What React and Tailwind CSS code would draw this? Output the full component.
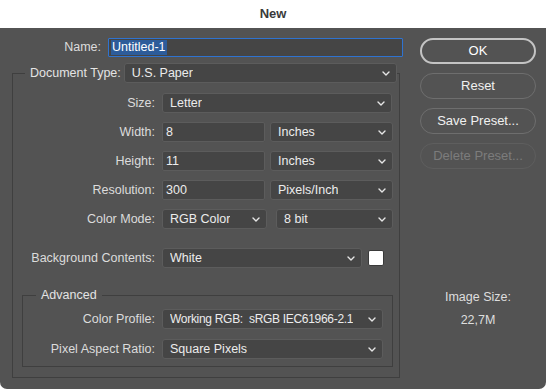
const font = { fontFamily: '"Liberation Sans", Arial, sans-serif' };

function Chevron() {
  return (
    <svg width="8" height="5" viewBox="0 0 8 5" className="shrink-0">
      <path d="M1 1l3 3 3-3" fill="none" stroke="#e6e6e6" strokeWidth="1.4" strokeLinecap="round" strokeLinejoin="round" />
    </svg>
  );
}

function Select({ value, className = '', textClass = '' }) {
  return (
    <div className={`h-[20px] flex items-center justify-between pl-[7px] pr-[6px] bg-[#454545] border border-[#5c5c5c] rounded-[3px] text-[#ececec] ${className}`}>
      <span className={`truncate ${textClass}`}>{value}</span>
      <Chevron />
    </div>
  );
}

function Input({ value, className = '' }) {
  return (
    <div className={`h-[20px] flex items-center pl-[3px] bg-[#454545] border border-[#5c5c5c] rounded-[2px] text-[#ececec] ${className}`}>
      {value}
    </div>
  );
}

function Row({ label, labelW = 'w-[149px]', children, className = '' }) {
  return (
    <div className={`flex items-center ${className}`}>
      <div className={`${labelW} shrink-0 pr-[7px] text-right text-[#dcdcdc]`}>{label}</div>
      {children}
    </div>
  );
}

function Button({ children, variant }) {
  const styles = {
    primary: 'border-2 border-[#c4c4c4] text-white',
    normal: 'border border-[#6e6e6e] text-[#f0f0f0]',
    disabled: 'border border-[#5e5e5e] text-[#7c7c7c]',
  };
  return (
    <div className={`h-[26px] w-[116px] rounded-full flex items-center justify-center text-[13px] ${styles[variant]}`}>
      {children}
    </div>
  );
}

export default function App() {
  return (
    <div className="w-[546px] h-[389px] bg-white text-[12.5px]" style={font}>
      <div className="h-[28px] flex items-center justify-center text-[13px] font-bold text-[#3a3a3a]">New</div>
      <div className="h-[361px] bg-[#535353] rounded-b-[7px] flex">
        <div className="w-[410px] pt-[10px] pl-[12px]">
          <Row label="Name:" labelW="w-[96px]" className="-ml-[12px] pl-[12px]">
            <div className="h-[19px] w-[295px] flex items-center pl-[2px] bg-[#454545] border border-[#2f73d0] rounded-[1px]">
              <span className="bg-[#2d5c9a] text-white px-[1px] leading-[15px]">Untitled-1</span>
            </div>
          </Row>

          <fieldset className="w-[388px] mt-[6px] border border-[#3f3f3f] pt-[10px] pb-[10px]">
            <legend className="ml-[12px] pl-[5px] flex items-center">
              <span className="text-[#e4e4e4] pr-[3px]">Document Type:</span>
              <Select value="U.S. Paper" className="w-[273px]" />
            </legend>

            <div className="flex flex-col gap-[9px]">
              <Row label="Size:">
                <Select value="Letter" className="w-[230px]" />
              </Row>
              <Row label="Width:">
                <Input value="8" className="w-[103px]" />
                <Select value="Inches" className="w-[123px] ml-[5px]" />
              </Row>
              <Row label="Height:">
                <Input value="11" className="w-[103px]" />
                <Select value="Inches" className="w-[123px] ml-[5px]" />
              </Row>
              <Row label="Resolution:">
                <Input value="300" className="w-[103px]" />
                <Select value="Pixels/Inch" className="w-[123px] ml-[5px]" />
              </Row>
              <Row label="Color Mode:">
                <Select value="RGB Color" className="w-[105px]" />
                <Select value="8 bit" className="w-[117px] ml-[9px]" />
              </Row>
            </div>

            <Row label="Background Contents:" className="mt-[19px]">
              <Select value="White" className="w-[200px]" />
              <div className="ml-[6px] w-[16px] h-[16px] bg-white rounded-[2px] border border-[#3a3a3a]" />
            </Row>

            <fieldset className="ml-[9px] mt-[19px] w-[371px] border border-[#3f3f3f] pt-[6px] pb-[7px]">
              <legend className="ml-[13px] px-[5px] text-[#e4e4e4] leading-[16px]">Advanced</legend>
              <div className="flex flex-col gap-[10px]">
                <Row label="Color Profile:" labelW="w-[139px]">
                  <Select
                    value="Working RGB:  sRGB IEC61966-2.1"
                    className="w-[221px]"
                    textClass="whitespace-pre text-[12px] tracking-[-0.3px]"
                  />
                </Row>
                <Row label="Pixel Aspect Ratio:" labelW="w-[139px]">
                  <Select value="Square Pixels" className="w-[221px]" />
                </Row>
              </div>
            </fieldset>
          </fieldset>
        </div>

        <div className="flex-1 pt-[10px] pl-[10px] flex flex-col">
          <div className="flex flex-col gap-[9px]">
            <Button variant="primary">OK</Button>
            <Button variant="normal">Reset</Button>
            <Button variant="normal">Save Preset...</Button>
            <Button variant="disabled">Delete Preset...</Button>
          </div>
          <div className="mt-[119px] w-[116px] flex flex-col items-center gap-[4px] text-[#dedede] text-[12.5px]">
            <div>Image Size:</div>
            <div>22,7M</div>
          </div>
        </div>
      </div>
    </div>
  );
}
